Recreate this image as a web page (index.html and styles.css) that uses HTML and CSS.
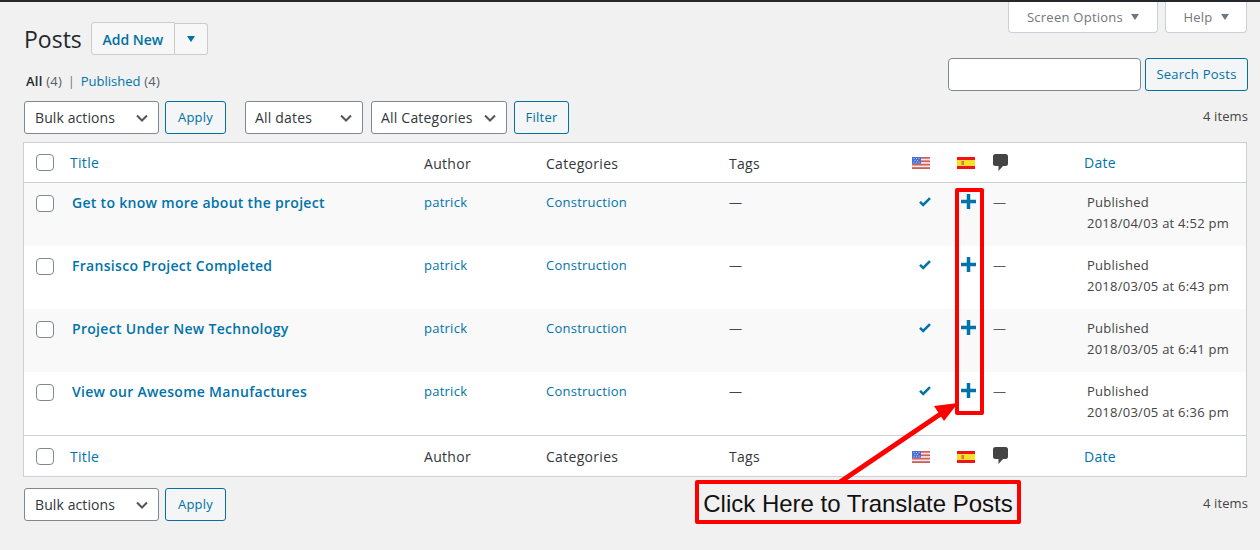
FILE: index.html
```html
<!DOCTYPE html>
<html lang="en">
<head>
<meta charset="utf-8">
<title>Posts</title>
<link rel="stylesheet" href="styles.css">
</head>
<body>
<svg class="defs" width="0" height="0" aria-hidden="true">
  <defs>
    <symbol id="us" viewBox="0 0 18 12">
      <rect width="18" height="12" fill="#f3e6e6"/>
      <rect y="0" width="18" height="1.7" fill="#d0605c"/><rect y="3.4" width="18" height="1.7" fill="#d0605c"/><rect y="6.8" width="18" height="1.7" fill="#d0605c"/><rect y="10.2" width="18" height="1.8" fill="#c9615b"/>
      <rect width="9" height="6.8" fill="#4a6fd0"/>
      <path d="M1.5 1.5h1M4 1.5h1M6.500 1.5h1M2.500 3.4h1M5 3.400h1M1.500 5.200h1M4 5.200h1M6.500 5.200h1" stroke="#b8c8ee" stroke-width="1"/>
    </symbol>
    <symbol id="es" viewBox="0 0 18 12">
      <rect width="18" height="12" fill="#f01414"/>
      <rect y="3" width="18" height="6" fill="#f7e02a"/>
      <rect x="4.500" y="4" width="2.500" height="4" fill="#d8764a"/>
    </symbol>
    <symbol id="bubble" viewBox="0 0 15 17">
      <path d="M2.500 0h10A2.500 2.500 0 0 1 15 2.500v7A2.500 2.500 0 0 1 12.500 12H10l-4.500 5v-5h-3A2.500 2.500 0 0 1 0 9.500v-7A2.500 2.500 0 0 1 2.500 0z" fill="#444"/>
    </symbol>
    <symbol id="check" viewBox="0 0 12 10">
      <path d="M1 4.800l3.200 3.200L11 1.200" fill="none" stroke="#0073aa" stroke-width="2.500"/>
    </symbol>
    <symbol id="plus" viewBox="0 0 15 15">
      <path d="M5.750 0h3.500v5.750H15v3.500H9.250V15h-3.500V9.250H0v-3.500h5.750z" fill="#0073aa"/>
    </symbol>
  </defs>
</svg>

<div class="page">
  <header class="head">
    <div class="title-group">
      <h1 class="title">Posts</h1>
      <div class="split">
        <a class="split-main">Add New</a>
        <a class="split-toggle"><span class="tri tri-blue"></span></a>
      </div>
    </div>
    <div class="tabs">
      <a class="tab tab-screen">Screen Options <span class="tri tri-grey"></span></a>
      <a class="tab tab-help">Help <span class="tri tri-grey"></span></a>
    </div>
  </header>

  <div class="sub-row">
    <p class="views"><b>All</b> <span class="count">(4)</span> <span class="sep">|</span> <a>Published</a> <span class="count">(4)</span></p>
    <div class="search">
      <input class="search-input" type="text" aria-label="Search">
      <button class="btn btn-search">Search Posts</button>
    </div>
  </div>

  <div class="toolbar toolbar-top">
    <select class="sel sel-bulk"><option>Bulk actions</option></select>
    <button class="btn btn-apply">Apply</button>
    <select class="sel sel-dates"><option>All dates</option></select>
    <select class="sel sel-cats"><option>All Categories</option></select>
    <button class="btn btn-filter">Filter</button>
    <span class="num">4 items</span>
  </div>

  <table class="posts">
    <colgroup>
      <col class="c-check"><col class="c-title"><col class="c-author"><col class="c-cat"><col class="c-tags"><col class="c-us"><col class="c-es"><col class="c-com"><col class="c-date">
    </colgroup>
    <thead>
      <tr>
        <th class="cb"><span class="box"></span></th>
        <th><a>Title</a></th><th>Author</th><th>Categories</th><th>Tags</th>
        <th class="ic"><svg class="flag"><use href="#us"/></svg></th>
        <th class="ic"><svg class="flag"><use href="#es"/></svg></th>
        <th class="ic-com"><svg class="bubble"><use href="#bubble"/></svg></th>
        <th class="th-date"><a>Date</a></th>
      </tr>
    </thead>
    <tbody>
      <tr class="alt">
        <td class="cb"><span class="box"></span></td>
        <td class="t"><a>Get to know more about the project</a></td>
        <td><a>patrick</a></td><td><a>Construction</a></td><td>—</td>
        <td class="ic"><svg class="check"><use href="#check"/></svg></td>
        <td class="ic"><svg class="plus"><use href="#plus"/></svg></td>
        <td class="dash">—</td>
        <td class="date">Published<br>2018/04/03 at 4:52 pm</td>
      </tr>
      <tr>
        <td class="cb"><span class="box"></span></td>
        <td class="t"><a>Fransisco Project Completed</a></td>
        <td><a>patrick</a></td><td><a>Construction</a></td><td>—</td>
        <td class="ic"><svg class="check"><use href="#check"/></svg></td>
        <td class="ic"><svg class="plus"><use href="#plus"/></svg></td>
        <td class="dash">—</td>
        <td class="date">Published<br>2018/03/05 at 6:43 pm</td>
      </tr>
      <tr class="alt">
        <td class="cb"><span class="box"></span></td>
        <td class="t"><a>Project Under New Technology</a></td>
        <td><a>patrick</a></td><td><a>Construction</a></td><td>—</td>
        <td class="ic"><svg class="check"><use href="#check"/></svg></td>
        <td class="ic"><svg class="plus"><use href="#plus"/></svg></td>
        <td class="dash">—</td>
        <td class="date">Published<br>2018/03/05 at 6:41 pm</td>
      </tr>
      <tr>
        <td class="cb"><span class="box"></span></td>
        <td class="t"><a>View our Awesome Manufactures</a></td>
        <td><a>patrick</a></td><td><a>Construction</a></td><td>—</td>
        <td class="ic"><svg class="check"><use href="#check"/></svg></td>
        <td class="ic"><svg class="plus"><use href="#plus"/></svg></td>
        <td class="dash">—</td>
        <td class="date">Published<br>2018/03/05 at 6:36 pm</td>
      </tr>
    </tbody>
    <tfoot>
      <tr>
        <th class="cb"><span class="box"></span></th>
        <th><a>Title</a></th><th>Author</th><th>Categories</th><th>Tags</th>
        <th class="ic"><svg class="flag"><use href="#us"/></svg></th>
        <th class="ic"><svg class="flag"><use href="#es"/></svg></th>
        <th class="ic-com"><svg class="bubble"><use href="#bubble"/></svg></th>
        <th class="th-date"><a>Date</a></th>
      </tr>
    </tfoot>
  </table>

  <div class="toolbar toolbar-bottom">
    <select class="sel sel-bulk"><option>Bulk actions</option></select>
    <button class="btn btn-apply">Apply</button>
    <span class="num">4 items</span>
  </div>
</div>

<div class="note-col"></div>
<svg class="note-arrow" width="1260" height="550" viewBox="0 0 1260 550" aria-hidden="true">
  <line x1="840" y1="482" x2="945" y2="411" stroke="#f00" stroke-width="5"/>
  <polygon points="958,403 934,406 944,421" fill="#f00"/>
</svg>
<div class="note-label">Click Here to Translate Posts</div>
</body>
</html>
```

FILE: styles.css
```css
* { box-sizing: border-box; }
html, body { margin: 0; padding: 0; }
body {
  height: 550px;
  overflow: hidden;
  position: relative;
  background: #f1f1f1;
  border-top: 2px solid #23282d;
  color: #444;
  font-family: "Open Sans", "Noto Sans", sans-serif;
  font-size: 13px;
  letter-spacing: .25px;
}
.defs { position: absolute; }
a { color: #0073aa; text-decoration: none; }
.page { padding: 0 13px 0 23px; }

.head { display: flex; justify-content: space-between; align-items: flex-start; }
.title-group { display: flex; align-items: center; padding: 20px 0 0 1px; }
.title { margin: 0 9px 0 0; font-size: 23px; font-weight: 400; color: #23282d; line-height: 32px; letter-spacing: 0; }
.split { display: flex; }
.split-main, .split-toggle {
  height: 33px;
  display: flex; align-items: center; justify-content: center;
  background: #f7f7f7; border: 1px solid #ccc; border-radius: 3px;
  color: #0071a1; font-weight: 600;
}
.split-main { width: 84px; padding-top: 1px; border-radius: 3px 0 0 3px; font-size: 14px; letter-spacing: 0; }
.split-toggle { width: 33px; height: 32px; margin-top: 1px; border-left: 0; border-radius: 0 3px 3px 0; }
.tri { display: inline-block; width: 0; height: 0; border-left: 4.500px solid transparent; border-right: 4.500px solid transparent; border-top: 6px solid; }
.tri-blue { border-top-color: #0071a1; }
.tri-grey { border-top-color: #72777c; margin-left: 8px; }
.tabs { display: flex; gap: 7px; }
.tab {
  height: 31px;
  display: flex; align-items: center; justify-content: center;
  background: #fff; border: 1px solid #ccd0d4; border-top: 0; border-radius: 0 0 4px 4px;
  color: #72777c;
}
.tab-screen { width: 150px; }
.tab-help { width: 82px; }

.sub-row { display: flex; justify-content: space-between; align-items: flex-end; margin-top: 3px; margin-right: -1px; }
.views { margin: 0 0 0 3px; line-height: 20px; height: 20px; color: #444; }
.views b { font-weight: 600; color: #23282d; }
.views a { letter-spacing: 0; }
.count { color: #555d66; }
.sep { color: #72777c; margin: 0 2px; }
.search { display: flex; gap: 4px; }
.search-input { width: 193px; height: 33px; background: #fff; border: 1px solid #7e8993; border-radius: 4px; }
.btn {
  height: 33px; padding: 0 0 1px; font: inherit; letter-spacing: inherit; color: #0071a1;
  background: #f3f5f6; border: 1px solid #0071a1; border-radius: 3px;
}
.btn-search { width: 103px; }
.btn-apply { width: 61px; }
.btn-filter { width: 55px; }

.toolbar { display: flex; align-items: center; padding-left: 1px; margin-right: -1px; }
.toolbar-top { margin-top: 10px; }
.toolbar-bottom { margin-top: 11px; }
.sel {
  appearance: none; -webkit-appearance: none;
  height: 33px; padding: 0 24px 0 9px;
  font: inherit; font-size: 14px; letter-spacing: .2px; color: #32373c;
  background: #fff url("data:image/svg+xml,%3Csvg xmlns='http://www.w3.org/2000/svg' width='12' height='8' viewBox='0 0 12 8'%3E%3Cpath d='M1 1.500l5 5 5-5' fill='none' stroke='%23555' stroke-width='2'/%3E%3C/svg%3E") no-repeat right 10px center;
  border: 1px solid #7e8993; border-radius: 3px;
}
.sel-bulk { width: 135px; padding-left: 10px; letter-spacing: .1px; }
.sel-dates { width: 118px; }
.sel-cats { width: 136px; padding-right: 0; }
.toolbar .btn-apply { margin-left: 6px; }
.toolbar .sel-dates { margin-left: 19px; }
.toolbar .sel-cats { margin-left: 8px; }
.toolbar .btn-filter { margin-left: 7px; }
.num { margin-left: auto; padding-bottom: 3px; color: #444; letter-spacing: .1px; }

.posts {
  width: 1224px; margin-top: 8px;
  table-layout: fixed; border-collapse: separate; border-spacing: 0;
  background: #fff; border: 1px solid #ccd0d4;
}
.c-check { width: 46px; }
.c-title { width: 354px; }
.c-author { width: 122px; }
.c-cat { width: 183px; }
.c-tags { width: 183px; }
.c-us { width: 45px; }
.c-es { width: 36px; }
.c-com { width: 91px; }
.c-date { width: 162px; }
.posts th, .posts td { padding: 0; text-align: left; font-weight: 400; }
.posts th { height: 40px; font-size: 14px; letter-spacing: .3px; vertical-align: middle; color: #32373c; }
.posts thead th { padding-top: 2px; border-bottom: 1px solid #ccd0d4; }
.posts thead th a { display: block; margin-top: -2px; }
.posts thead .box, .posts thead .flag { margin-top: -2px; }
.posts tfoot th { height: 41px; padding-top: 1px; border-top: 1px solid #ccd0d4; }
.posts td { height: 63px; vertical-align: top; padding-top: 10px; }
.alt td { background: #f9f9f9; }
.cb { padding-left: 12px !important; }
td.cb { padding-top: 12px !important; }
.box { display: block; width: 18px; height: 17px; background: #fff; border: 1px solid #7e8993; border-radius: 4px; }
.t { padding-left: 2px !important; font-size: 14px; letter-spacing: .3px; font-weight: 600 !important; }
.ic svg { display: block; }
.flag { width: 18px; height: 12px; }
.bubble { width: 15px; height: 17px; display: block; margin-top: -3px; }
.check { width: 12px; height: 10px; margin: 4px 0 0 7px; }
.plus { width: 15px; height: 15px; margin: 1px 0 0 4px; }
td.dash { color: #555d66; }
.date { padding-left: 3px !important; line-height: 21px; padding-top: 9px !important; }

.note-col {
  position: absolute; left: 955px; top: 186px;
  width: 29px; height: 227px;
  border: 4px solid #f00; border-radius: 2px;
}
.note-arrow { position: absolute; left: 0; top: -2px; pointer-events: none; }
.note-label {
  position: absolute; left: 695px; top: 478px;
  width: 326px; height: 44px; padding-top: 3px;
  display: flex; align-items: center; justify-content: center;
  border: 4px solid #f00; border-radius: 2px;
  background: #f1f1f1; color: #111; white-space: nowrap; letter-spacing: 0;
  font-family: "Liberation Sans", Arial, sans-serif; font-size: 24px;
}
```
